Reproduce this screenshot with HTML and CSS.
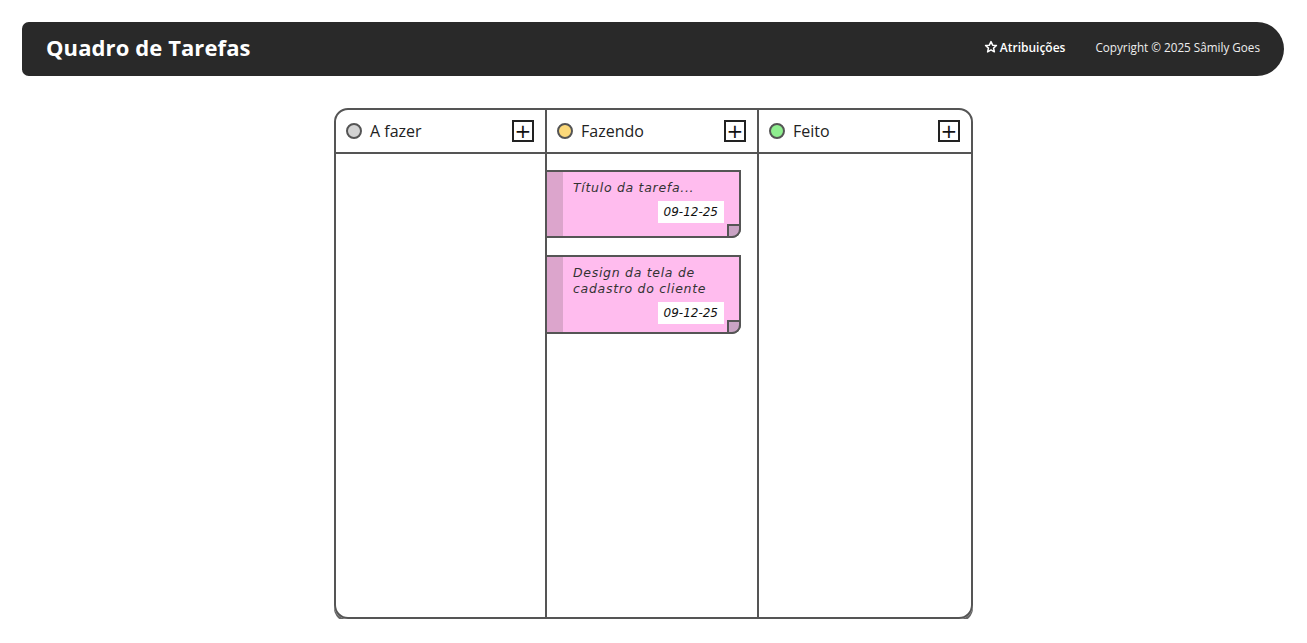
FILE: index.html
```html
<!DOCTYPE html>
<html lang="pt-BR">
<head>
<meta charset="utf-8">
<title>Quadro de Tarefas</title>
<link rel="stylesheet" href="styles.css">
</head>
<body>
<header class="topbar">
  <h1 class="brand">Quadro de Tarefas</h1>
  <nav class="topnav">
    <a class="attrib" href="#"><svg class="star" viewBox="0 0 24 24" width="14" height="14"><path d="M12 2.8l2.8 6 6.5.7-4.9 4.4 1.4 6.4L12 17l-5.8 3.3 1.4-6.4-4.9-4.4 6.5-.7z" fill="none" stroke="#fff" stroke-width="2.6" stroke-linejoin="round"/></svg>Atribuições</a>
    <span class="copy">Copyright © 2025 Sâmily Goes</span>
  </nav>
</header>

<main class="board">
  <section class="col">
    <div class="col-head">
      <span class="dot dot-todo"></span>
      <span class="col-title">A fazer</span>
      <button class="add" type="button">+</button>
    </div>
    <div class="col-body"></div>
  </section>
  <section class="col">
    <div class="col-head">
      <span class="dot dot-doing"></span>
      <span class="col-title">Fazendo</span>
      <button class="add" type="button">+</button>
    </div>
    <div class="col-body">
      <article class="card">
        <div class="card-stripe"></div>
        <div class="card-main">
          <p class="card-text">Título da tarefa...</p>
          <span class="card-date">09-12-25</span>
        </div>
        <span class="fold"></span>
      </article>
      <article class="card">
        <div class="card-stripe"></div>
        <div class="card-main">
          <p class="card-text">Design da tela de cadastro do cliente</p>
          <span class="card-date">09-12-25</span>
        </div>
        <span class="fold"></span>
      </article>
    </div>
  </section>
  <section class="col">
    <div class="col-head">
      <span class="dot dot-done"></span>
      <span class="col-title">Feito</span>
      <button class="add" type="button">+</button>
    </div>
    <div class="col-body"></div>
  </section>
</main>
</body>
</html>
```

FILE: styles.css
```css
* { box-sizing: border-box; }
html, body { margin: 0; padding: 0; background: #fff; }
body { font-family: "Open Sans", "Noto Sans", sans-serif; color: #222; }

.topbar {
  margin: 22px 23px 0 22px;
  height: 54px;
  background: #292929;
  border-radius: 7px 28px 28px 7px;
  display: flex;
  align-items: center;
  justify-content: space-between;
  padding: 0 24px 4px 24px;
}
.brand {
  margin: 0;
  color: #fff;
  font-family: "Open Sans", sans-serif;
  font-weight: 700;
  font-size: 22px;
  line-height: 28px;
  letter-spacing: 0.1px;
}
.topnav { display: flex; align-items: center; gap: 32px; }
.attrib {
  color: #fff; text-decoration: none;
  font-size: 12px; font-weight: 600;
  display: flex; align-items: center; gap: 2px;
  margin-right: -2px;
}
.star { display: block; margin-top: -1px; }
.copy { color: #eee; font-size: 11.7px; }

.board {
  width: 639px;
  height: 511px;
  margin: 32px auto 0;
  border: 2px solid #555;
  border-radius: 14px;
  box-shadow: 0 3px 0 #666;
  display: grid;
  grid-template-columns: 211px 212px 1fr;
  overflow: hidden;
}
.col { display: flex; flex-direction: column; border-right: 2px solid #555; }
.col:last-child { border-right: none; }
.col-head {
  height: 44px;
  border-bottom: 2px solid #555;
  display: flex;
  align-items: center;
  padding: 0 11px 0 10px;
}
.dot {
  width: 16px; height: 16px; border-radius: 50%;
  border: 2px solid #555;
  margin-right: 8px;
}
.dot-todo { background: #d3d3d3; }
.dot-doing { background: #fcd97a; }
.dot-done { background: #8fee8f; }
.col-title { flex: 1; font-size: 16px; color: #222; }
.add {
  width: 22px; height: 22px;
  border: 2px solid #222;
  background: #fff;
  padding: 0;
  font-family: "DejaVu Sans", sans-serif;
  font-size: 20px; line-height: 16px;
  color: #111;
  display: flex; align-items: center; justify-content: center;
}
.col-body { flex: 1; padding-top: 16px; display: flex; flex-direction: column; gap: 17px; }

.card {
  position: relative;
  width: 194px;
  min-height: 68px;
  display: flex;
  background: #ffbcee;
  border: 2px solid #555;
  border-left: none;
  border-bottom-right-radius: 9px;
}
.card-stripe { width: 16px; background: #dca5cc; }
.card-main {
  flex: 1;
  padding: 8px 15px 8px 10px;
  display: flex; flex-direction: column; align-items: flex-start;
}
.card-text {
  margin: 0;
  font-family: "DejaVu Sans", sans-serif;
  font-style: italic;
  font-size: 12.5px;
  line-height: 16px;
  letter-spacing: 0.7px;
  color: #333;
}
.card-date {
  align-self: flex-end;
  margin-top: 5px;
  background: #fff;
  padding: 3px 6px;
  font-family: "DejaVu Sans", sans-serif;
  font-style: italic;
  font-size: 12px;
  line-height: 16px;
  color: #111;
}
.fold {
  position: absolute;
  right: -2px; bottom: -2px;
  width: 14px; height: 14px;
  background: #c9a3c4;
  border: 2px solid #555;
  border-bottom-right-radius: 9px;
}
```
